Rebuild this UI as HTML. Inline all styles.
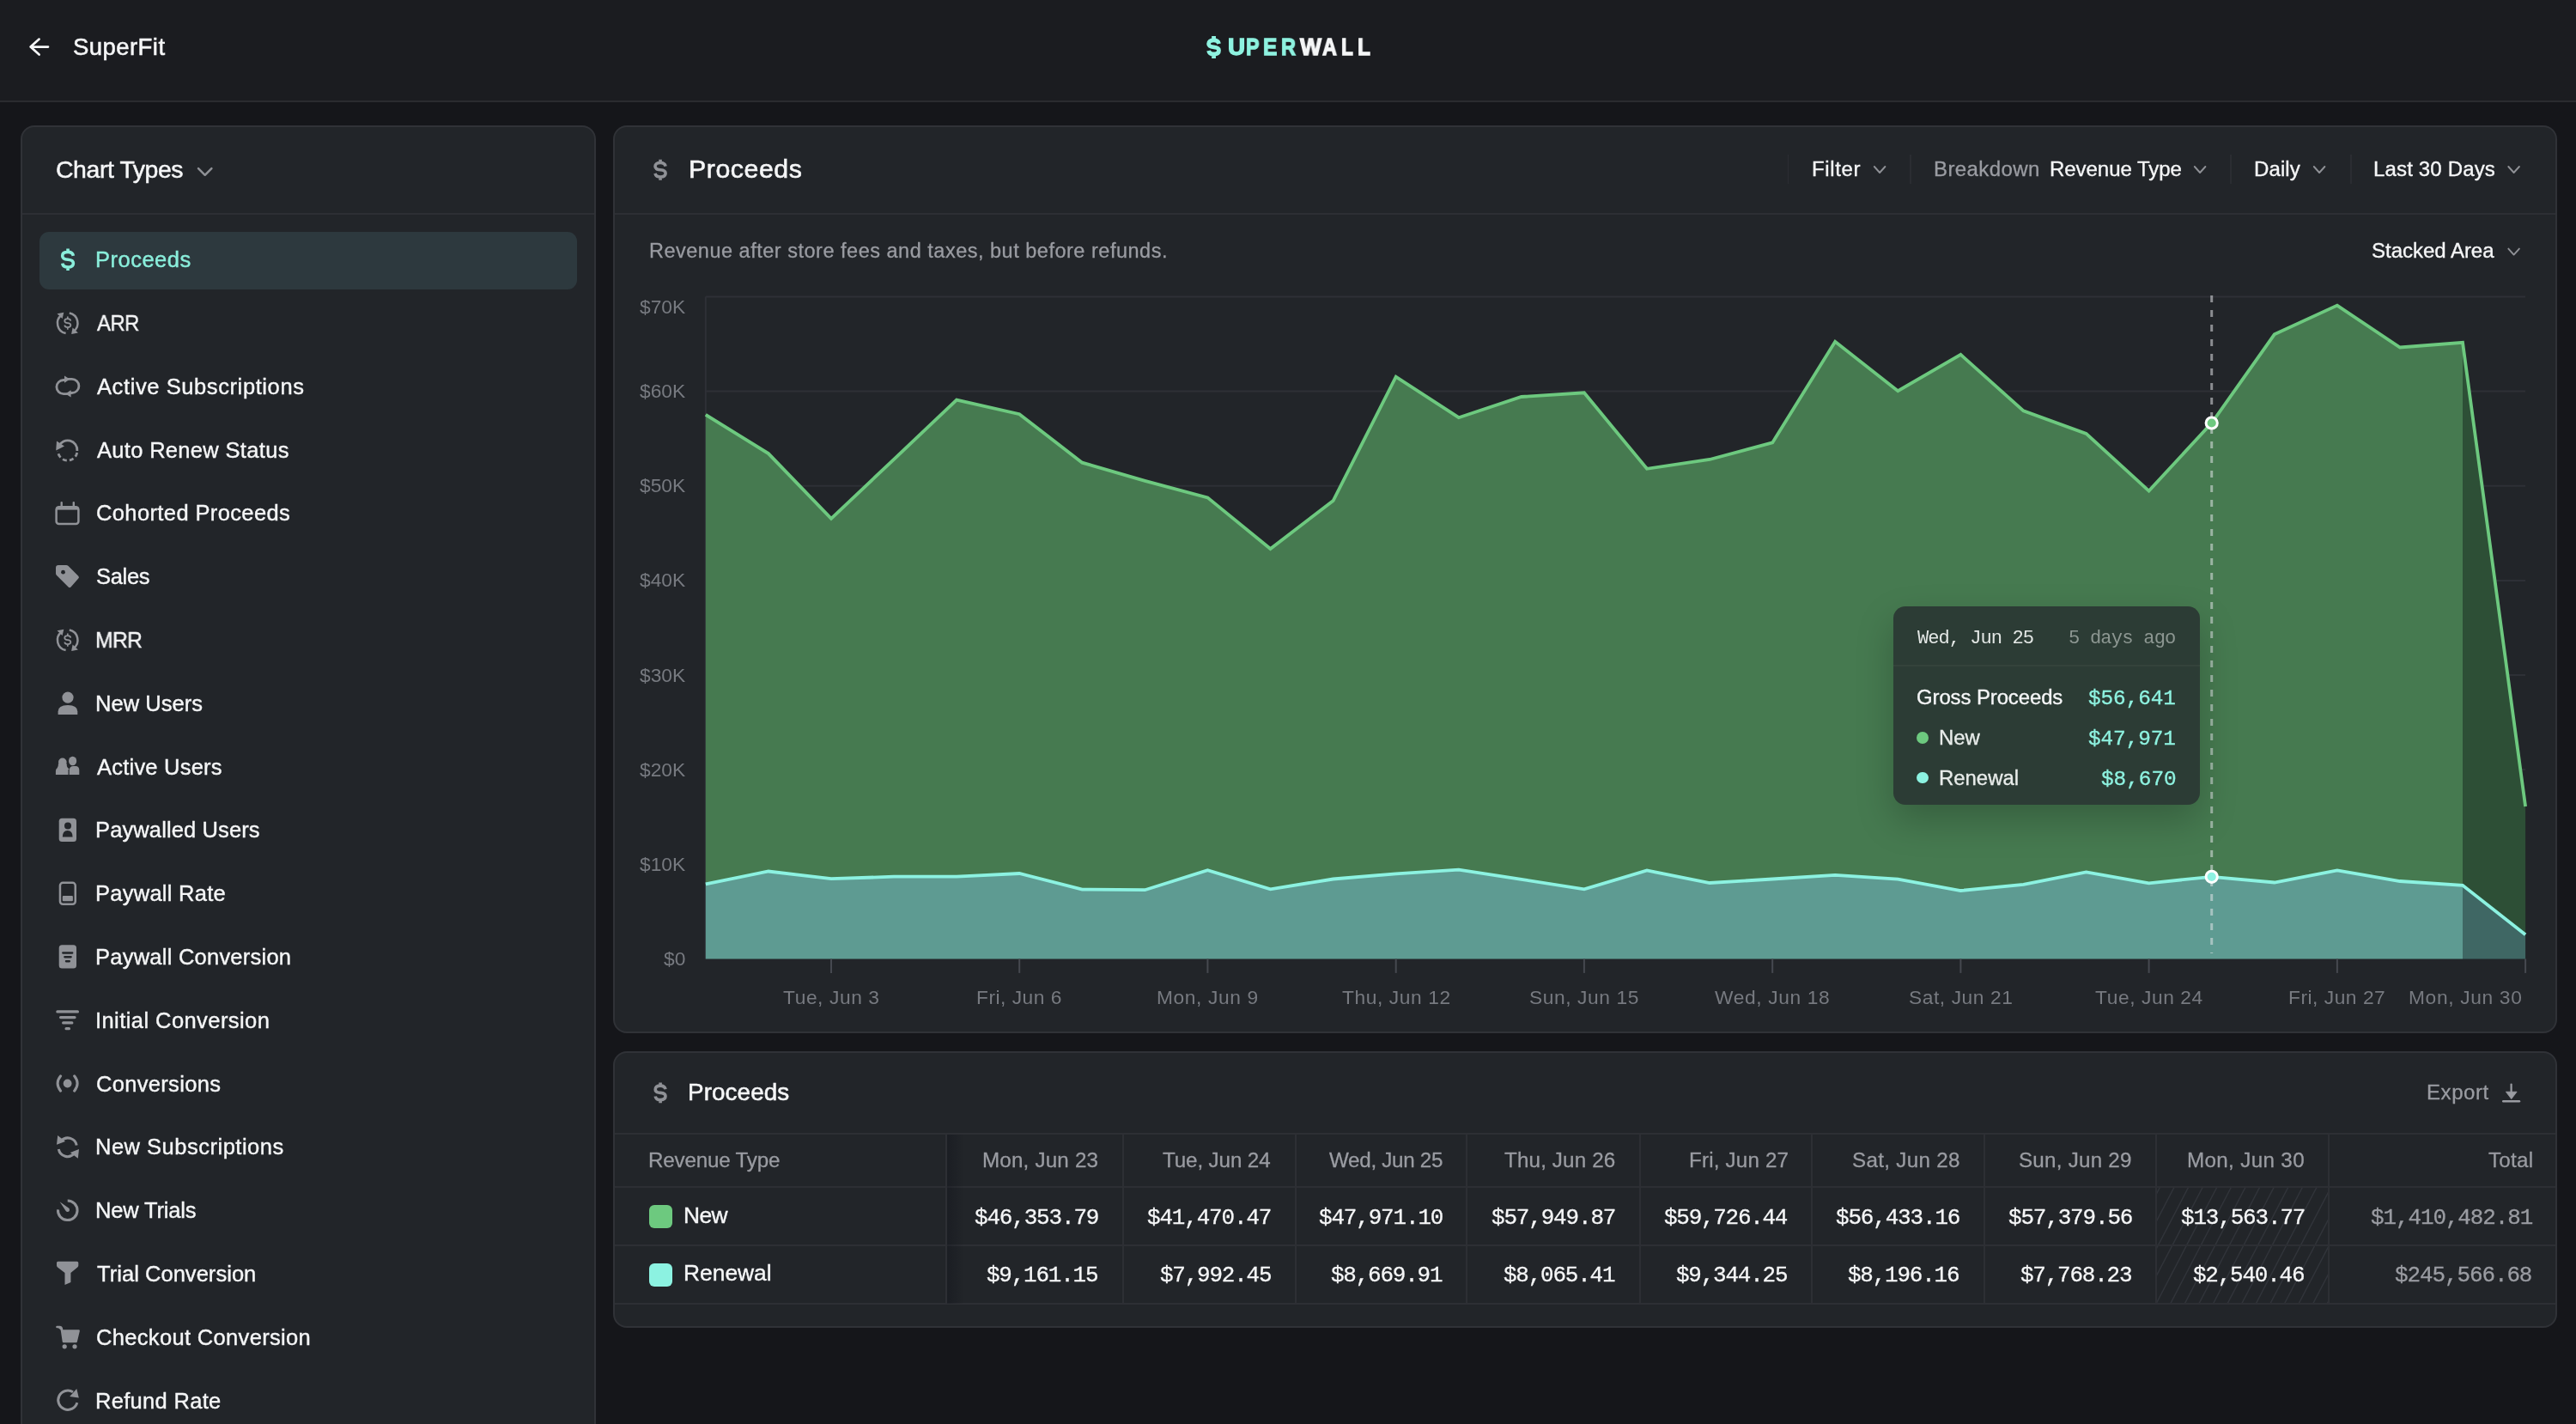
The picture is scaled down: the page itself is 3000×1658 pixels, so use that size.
<!DOCTYPE html>
<html><head><meta charset="utf-8"><title>SuperFit - Proceeds</title>
<style>
html,body{margin:0;padding:0;width:3000px;height:1658px;overflow:hidden;background:#15161a;}
body{position:relative;font-family:"Liberation Sans",sans-serif;}
.b{position:absolute;box-sizing:content-box;}
svg.b{overflow:visible;}
.t{position:absolute;white-space:pre;will-change:transform;}
</style></head><body>
<div class="b" style="left:0;top:0;width:3000px;height:117px;background:#1b1c20"></div>
<div class="b" style="left:0;top:117px;width:3000px;height:2px;background:#2a2b2f"></div>
<svg class="b" style="left:0;top:0" width="100" height="100" viewBox="0 0 100 100"><path d="M56 54.6 H36.2 M45.6 45.6 L35.6 54.6 L45.6 63.6" fill="none" stroke="#f5f6f7" stroke-width="2.7" stroke-linecap="round" stroke-linejoin="round"/></svg>
<svg class="b" style="left:0;top:0" width="1600" height="100" viewBox="0 0 1600 100"><g transform="translate(1407.60 46.90) scale(11.900 16.100)"><path d="M1 0.25 Q0.93 0 0.5 0 Q0 0 0 0.26 Q0 0.47 0.5 0.5 Q1 0.53 1 0.74 Q1 1 0.5 1 Q0.06 1 0 0.75 M0.5 -0.311 V0 M0.5 1 V1.311" fill="none" stroke="#8ef2e0" stroke-width="4.8" vector-effect="non-scaling-stroke" stroke-linecap="butt"/></g></svg>
<div class="b" style="left:24px;top:146px;width:666px;height:1600px;background:#222529;border:2px solid #303237;border-radius:16px"></div>
<div class="b" style="left:26px;top:248px;width:666px;height:2px;background:#2d2f34"></div>
<svg class="b" style="left:0;top:0" width="300" height="300" viewBox="0 0 300 300"><path d="M231 196.2 L238.7 203.8 L246.4 196.2" fill="none" stroke="#8f9196" stroke-width="2.5" stroke-linecap="round" stroke-linejoin="round"/></svg>
<div class="b" style="left:46px;top:270px;width:626px;height:66.5px;background:#2d393e;border-radius:11px"></div>
<svg class="b" style="left:0;top:0" width="300" height="400" viewBox="0 0 300 400"><g transform="translate(72.70 293.36) scale(12.700 17.688)"><path d="M1 0.25 Q0.93 0 0.5 0 Q0 0 0 0.26 Q0 0.47 0.5 0.5 Q1 0.53 1 0.74 Q1 1 0.5 1 Q0.06 1 0 0.75 M0.5 -0.224 V0 M0.5 1 V1.224" fill="none" stroke="#8aeedb" stroke-width="3.6" vector-effect="non-scaling-stroke" stroke-linecap="butt"/></g></svg>
<svg class="b" style="left:0;top:0" width="700" height="1658" viewBox="0 0 700 1658"><g transform="translate(0 73.80)"><path d="M71.8 292.9 A12 12 0 0 0 76.6 314.3" fill="none" stroke="#909297" stroke-width="2.5"/><path d="M80.8 290.7 A12 12 0 0 1 85.6 312.1" fill="none" stroke="#909297" stroke-width="2.5"/><path d="M66.5 291.5 L74.3 289.9 L72.6 297.3 Z" fill="#909297"/><path d="M90.9 313.7 L83.1 315.1 L84.6 307.7 Z" fill="#909297"/><g transform="translate(75.25 297.25) scale(7.100 10.096)"><path d="M1 0.25 Q0.93 0 0.5 0 Q0 0 0 0.26 Q0 0.47 0.5 0.5 Q1 0.53 1 0.74 Q1 1 0.5 1 Q0.06 1 0 0.75 M0.5 -0.253 V0 M0.5 1 V1.253" fill="none" stroke="#909297" stroke-width="1.7" vector-effect="non-scaling-stroke" stroke-linecap="butt"/></g></g><g transform="translate(0 442.80)"><path d="M71.8 292.9 A12 12 0 0 0 76.6 314.3" fill="none" stroke="#909297" stroke-width="2.5"/><path d="M80.8 290.7 A12 12 0 0 1 85.6 312.1" fill="none" stroke="#909297" stroke-width="2.5"/><path d="M66.5 291.5 L74.3 289.9 L72.6 297.3 Z" fill="#909297"/><path d="M90.9 313.7 L83.1 315.1 L84.6 307.7 Z" fill="#909297"/><g transform="translate(75.25 297.25) scale(7.100 10.096)"><path d="M1 0.25 Q0.93 0 0.5 0 Q0 0 0 0.26 Q0 0.47 0.5 0.5 Q1 0.53 1 0.74 Q1 1 0.5 1 Q0.06 1 0 0.75 M0.5 -0.253 V0 M0.5 1 V1.253" fill="none" stroke="#909297" stroke-width="1.7" vector-effect="non-scaling-stroke" stroke-linecap="butt"/></g></g><g transform="translate(0 147.60)"><path d="M77 293.70000000000005 H83.8 A8.1 8.1 0 0 1 83.8 309.9 H82" fill="none" stroke="#909297" stroke-width="2.8"/><path d="M80.5 311.1 H74 A8.1 8.1 0 0 1 74 294.9 H75" fill="none" stroke="#909297" stroke-width="2.8"/><path d="M75 289.79999999999995 L81.4 294.0 L75 298.20000000000005 Z" fill="#909297"/><path d="M82.6 306.6 L76.2 310.79999999999995 L82.6 315.0 Z" fill="#909297"/></g><g transform="translate(0 221.40)"><path d="M68.5 298.1 A11.2 11.2 0 0 1 89.9 303.6" fill="none" stroke="#909297" stroke-width="2.8"/><path d="M89.9 303.6 A11.2 11.2 0 0 1 67.5 303.6" fill="none" stroke="#909297" stroke-width="2.8" stroke-dasharray="5 3.2" stroke-dashoffset="-2"/><path d="M65.2 303.1 L66 292.1 L75 298.1 Z" fill="#909297"/></g><g transform="translate(0 295.20)"><rect x="65.6" y="295.00000000000006" width="25.8" height="19.9" rx="3" fill="none" stroke="#909297" stroke-width="2.5"/><rect x="65.6" y="295.00000000000006" width="25.8" height="3.4" fill="#909297"/><rect x="70.5" y="288.7" width="2.4" height="6" rx="1.2" fill="#909297"/><rect x="84.6" y="288.7" width="2.4" height="6" rx="1.2" fill="#909297"/></g><g transform="translate(0 369.00)"><path d="M65 292 Q65 289 68 289 H77 Q78.5 289 79.6 290.1 L91.3 301.79999999999995 Q92.7 303.20000000000005 91.3 304.6 L82.5 314.6 Q81 316 79.6 314.6 L66.1 301.1 Q65 300 65 298.5 Z" fill="#909297"/><circle cx="73.5" cy="297.20000000000005" r="2.4" fill="#222529"/></g><g transform="translate(0 516.60)"><circle cx="79" cy="295.5" r="6.6" fill="#909297"/><path d="M67.6 315.4 V311.9 Q67.6 304.4 79 304.4 Q90.3 304.4 90.3 311.9 V315.4 Z" fill="#909297"/></g><g transform="translate(0 590.40)"><circle cx="72.8" cy="296.9" r="4.8" fill="#909297"/><path d="M68 298.6 Q68 302.6 66.5 304.1 H79 Q77.6 302.6 77.6 298.6 Z" fill="#909297"/><path d="M64.9 311.6 V307.6 Q64.9 303.1 69.5 303.1 H76.5 Q81 303.1 81 307.6 V311.6 Z" fill="#909297"/><ellipse cx="84.6" cy="295.6" rx="4.6" ry="5.2" fill="#909297"/><path d="M80.8 311.6 V306.6 Q80.8 301.6 85.5 301.6 H88 Q92.3 301.6 92.3 306.6 V311.6 Z" fill="#909297"/><path d="M80.1 311.6 V305.6" stroke="#222529" stroke-width="1.2"/></g><g transform="translate(0 664.20)"><rect x="68.7" y="288.5" width="20.3" height="27.3" rx="3.5" fill="#909297"/><circle cx="79" cy="297.4" r="4" fill="#222529"/><path d="M72.8 310.4 Q72.8 302.79999999999995 78.7 302.79999999999995 Q84.6 302.79999999999995 84.6 310.4 Z" fill="#222529"/></g><g transform="translate(0 738.00)"><rect x="69.95" y="289.8499999999999" width="17.8" height="24.9" rx="3.2" fill="none" stroke="#909297" stroke-width="2.5"/><rect x="72.8" y="305" width="12.1" height="6.2" rx="1" fill="#909297"/></g><g transform="translate(0 811.80)"><rect x="68.7" y="288.5" width="20.3" height="27.2" rx="3.5" fill="#909297"/><rect x="72.1" y="296.5" width="13.3" height="2.4" rx="1.1" fill="#222529"/><rect x="74.2" y="301.20000000000005" width="9.6" height="2.4" rx="1.1" fill="#222529"/><rect x="75.8" y="306.20000000000005" width="6.2" height="2.4" rx="1.1" fill="#222529"/></g><g transform="translate(0 885.60)"><path d="M66.9 292.30000000000007 H90.4 M70.6 298.9999999999999 H87 M73.7 305.30000000000007 H83.8 M77.1 312.1 H80.4" stroke="#909297" stroke-width="3.3" stroke-linecap="round"/></g><g transform="translate(0 959.40)"><circle cx="78.6" cy="302.1" r="4.9" fill="#909297"/><path d="M70.6 293.40000000000003 Q63.6 302.1 70.6 310.8" fill="none" stroke="#909297" stroke-width="3" stroke-linecap="round"/><path d="M86.6 293.40000000000003 Q93.6 302.1 86.6 310.8" fill="none" stroke="#909297" stroke-width="3" stroke-linecap="round"/></g><g transform="translate(0 1033.20)"><path d="M71.5 294.79999999999995 A10.5 10.5 0 0 1 89.2 300.29999999999995" fill="none" stroke="#909297" stroke-width="3"/><path d="M86.5 309.79999999999995 A10.5 10.5 0 0 1 68.3 304.79999999999995" fill="none" stroke="#909297" stroke-width="3"/><path d="M66 299.49999999999994 L67.2 288.79999999999995 L76 295.79999999999995 Z" fill="#909297"/><path d="M92 304.79999999999995 L90.8 315.59999999999997 L81.8 308.79999999999995 Z" fill="#909297"/></g><g transform="translate(0 1107.00)"><path d="M78.7 290.99999999999994 A11.3 11.3 0 1 1 67.5 301.29999999999995" fill="none" stroke="#909297" stroke-width="3"/><path d="M69.6 292.29999999999995 L80.6 300.09999999999997 Q82 303.9 78.4 304.09999999999997 Q76.8 303.79999999999995 76.2 302.29999999999995 Z" fill="#909297"/></g><g transform="translate(0 1180.80)"><path d="M66 289.5 Q66 287.9000000000001 67.6 287.9000000000001 H89.7 Q91.3 287.9000000000001 91.3 289.5 V292.79999999999995 Q91.3 294.0 90.3 294.79999999999995 L82.4 301.20000000000005 V312.20000000000005 L75.5 315.20000000000005 V301.20000000000005 L67 294.79999999999995 Q66 294.0 66 292.79999999999995 Z" fill="#909297"/></g><g transform="translate(0 1254.60)"><path d="M66.5 290.4000000000001 H70 Q71.4 290.4000000000001 71.7 291.9000000000001 L74 307.4000000000001 H88.6 L91.6 294.9000000000001 H72" fill="#909297" stroke="#909297" stroke-width="2.6" stroke-linejoin="round" stroke-linecap="round"/><circle cx="75.2" cy="313.20000000000005" r="2.6" fill="#909297"/><circle cx="87" cy="313.20000000000005" r="2.6" fill="#909297"/></g><g transform="translate(0 1328.40)"><path d="M85 292.3999999999998 A11.2 11.2 0 1 0 89.8 304.6999999999998" fill="none" stroke="#909297" stroke-width="3"/><path d="M81.2 297.49999999999983 L89.3 288.49999999999983 L91.8 299.1999999999998 Z" fill="#909297"/></g></svg>
<div class="b" style="left:714.2px;top:146px;width:2259.8px;height:1053.4px;background:#222529;border:2px solid #303237;border-radius:16px"></div>
<div class="b" style="left:716.2px;top:248px;width:2259.8px;height:2px;background:#2d2f34"></div>
<svg class="b" style="left:0;top:0" width="1000" height="400" viewBox="0 0 1000 400"><g transform="translate(763.00 189.53) scale(12.100 16.447)"><path d="M1 0.25 Q0.93 0 0.5 0 Q0 0 0 0.26 Q0 0.47 0.5 0.5 Q1 0.53 1 0.74 Q1 1 0.5 1 Q0.06 1 0 0.75 M0.5 -0.227 V0 M0.5 1 V1.227" fill="none" stroke="#8f9196" stroke-width="3.6" vector-effect="non-scaling-stroke" stroke-linecap="butt"/></g></svg>
<div class="b" style="left:2081.7px;top:180px;width:1.8px;height:34px;background:#2b2d32"></div>
<div class="b" style="left:2224.0px;top:180px;width:1.8px;height:34px;background:#2b2d32"></div>
<div class="b" style="left:2597.1px;top:180px;width:1.8px;height:34px;background:#2b2d32"></div>
<div class="b" style="left:2736.9px;top:180px;width:1.8px;height:34px;background:#2b2d32"></div>
<svg class="b" style="left:0;top:0" width="3000" height="1658" viewBox="0 0 3000 1658"><line x1="821.8" y1="1006.3" x2="2941.1" y2="1006.3" stroke="#2e3036" stroke-width="2"/><line x1="821.8" y1="896.1" x2="2941.1" y2="896.1" stroke="#2e3036" stroke-width="2"/><line x1="821.8" y1="786.0" x2="2941.1" y2="786.0" stroke="#2e3036" stroke-width="2"/><line x1="821.8" y1="675.9" x2="2941.1" y2="675.9" stroke="#2e3036" stroke-width="2"/><line x1="821.8" y1="565.8" x2="2941.1" y2="565.8" stroke="#2e3036" stroke-width="2"/><line x1="821.8" y1="455.6" x2="2941.1" y2="455.6" stroke="#2e3036" stroke-width="2"/><line x1="821.8" y1="345.5" x2="2941.1" y2="345.5" stroke="#2e3036" stroke-width="2"/><line x1="821.8" y1="345.5" x2="821.8" y2="1116.4" stroke="#2e3036" stroke-width="2"/><polygon points="821.8,482.8 894.9,528.1 968.0,603.9 1041.0,534.8 1114.1,465.7 1187.2,482.2 1260.3,538.7 1333.4,559.8 1406.4,579.4 1479.5,639.0 1552.6,583.1 1625.7,438.7 1698.8,486.2 1771.8,462.0 1844.9,457.3 1918.0,545.8 1991.1,535.0 2064.2,515.4 2137.2,397.7 2210.3,455.2 2283.4,412.9 2356.5,478.4 2429.6,504.9 2502.6,571.6 2575.7,492.5 2648.8,389.3 2721.9,355.6 2795.0,404.5 2868.0,398.8 2868.0,1030.8 2795.0,1026.0 2721.9,1013.4 2648.8,1027.5 2575.7,1020.8 2502.6,1028.3 2429.6,1015.4 2356.5,1029.9 2283.4,1037.0 2210.3,1023.7 2137.2,1018.8 2064.2,1023.5 1991.1,1028.0 1918.0,1013.5 1844.9,1035.3 1771.8,1023.9 1698.8,1012.6 1625.7,1017.3 1552.6,1023.5 1479.5,1035.3 1406.4,1013.2 1333.4,1036.2 1260.3,1035.6 1187.2,1017.0 1114.1,1020.7 1041.0,1020.7 968.0,1023.2 894.9,1014.5 821.8,1029.4" fill="#467a50"/><polygon points="821.8,1029.4 894.9,1014.5 968.0,1023.2 1041.0,1020.7 1114.1,1020.7 1187.2,1017.0 1260.3,1035.6 1333.4,1036.2 1406.4,1013.2 1479.5,1035.3 1552.6,1023.5 1625.7,1017.3 1698.8,1012.6 1771.8,1023.9 1844.9,1035.3 1918.0,1013.5 1991.1,1028.0 2064.2,1023.5 2137.2,1018.8 2210.3,1023.7 2283.4,1037.0 2356.5,1029.9 2429.6,1015.4 2502.6,1028.3 2575.7,1020.8 2648.8,1027.5 2721.9,1013.4 2795.0,1026.0 2868.0,1030.8 2868.0,1116.4 821.8,1116.4" fill="#5e9b92"/><polygon points="2868.0,398.8 2941.1,938.9 2941.1,1088.3 2868.0,1030.8" fill="#2d4f36"/><polygon points="2868.0,1030.8 2941.1,1088.3 2941.1,1116.4 2868.0,1116.4" fill="#3f6764"/><polyline points="821.8,482.8 894.9,528.1 968.0,603.9 1041.0,534.8 1114.1,465.7 1187.2,482.2 1260.3,538.7 1333.4,559.8 1406.4,579.4 1479.5,639.0 1552.6,583.1 1625.7,438.7 1698.8,486.2 1771.8,462.0 1844.9,457.3 1918.0,545.8 1991.1,535.0 2064.2,515.4 2137.2,397.7 2210.3,455.2 2283.4,412.9 2356.5,478.4 2429.6,504.9 2502.6,571.6 2575.7,492.5 2648.8,389.3 2721.9,355.6 2795.0,404.5 2868.0,398.8 2941.1,938.9" fill="none" stroke="#6dc97f" stroke-width="3.8" stroke-linejoin="miter"/><polyline points="821.8,1029.4 894.9,1014.5 968.0,1023.2 1041.0,1020.7 1114.1,1020.7 1187.2,1017.0 1260.3,1035.6 1333.4,1036.2 1406.4,1013.2 1479.5,1035.3 1552.6,1023.5 1625.7,1017.3 1698.8,1012.6 1771.8,1023.9 1844.9,1035.3 1918.0,1013.5 1991.1,1028.0 2064.2,1023.5 2137.2,1018.8 2210.3,1023.7 2283.4,1037.0 2356.5,1029.9 2429.6,1015.4 2502.6,1028.3 2575.7,1020.8 2648.8,1027.5 2721.9,1013.4 2795.0,1026.0 2868.0,1030.8 2941.1,1088.3" fill="none" stroke="#8cf2e1" stroke-width="3.8" stroke-linejoin="miter"/><line x1="968.0" y1="1116.4" x2="968.0" y2="1132.9" stroke="#464950" stroke-width="2"/><line x1="1187.2" y1="1116.4" x2="1187.2" y2="1132.9" stroke="#464950" stroke-width="2"/><line x1="1406.4" y1="1116.4" x2="1406.4" y2="1132.9" stroke="#464950" stroke-width="2"/><line x1="1625.7" y1="1116.4" x2="1625.7" y2="1132.9" stroke="#464950" stroke-width="2"/><line x1="1844.9" y1="1116.4" x2="1844.9" y2="1132.9" stroke="#464950" stroke-width="2"/><line x1="2064.2" y1="1116.4" x2="2064.2" y2="1132.9" stroke="#464950" stroke-width="2"/><line x1="2283.4" y1="1116.4" x2="2283.4" y2="1132.9" stroke="#464950" stroke-width="2"/><line x1="2502.6" y1="1116.4" x2="2502.6" y2="1132.9" stroke="#464950" stroke-width="2"/><line x1="2721.9" y1="1116.4" x2="2721.9" y2="1132.9" stroke="#464950" stroke-width="2"/><line x1="2941.1" y1="1116.4" x2="2941.1" y2="1132.9" stroke="#464950" stroke-width="2"/><line x1="2575.7" y1="344" x2="2575.7" y2="1110" stroke="rgba(225,228,232,0.55)" stroke-width="3" stroke-dasharray="8 9"/><circle cx="2575.7" cy="492.5" r="6.6" fill="#6dc97f" stroke="#fff" stroke-width="3"/><circle cx="2575.7" cy="1020.8" r="6.6" fill="#8cf2e1" stroke="#fff" stroke-width="3"/><path d="M2182.8 194.0 L2189.1 201.0 L2195.3999999999996 194.0" fill="none" stroke="#8f9196" stroke-width="1.9" stroke-linecap="round" stroke-linejoin="round"/><path d="M2555.8 194.0 L2562.1 201.0 L2568.3999999999996 194.0" fill="none" stroke="#8f9196" stroke-width="1.9" stroke-linecap="round" stroke-linejoin="round"/><path d="M2694.8 194.0 L2701.1 201.0 L2707.3999999999996 194.0" fill="none" stroke="#8f9196" stroke-width="1.9" stroke-linecap="round" stroke-linejoin="round"/><path d="M2921.3 194.0 L2927.6 201.0 L2933.8999999999996 194.0" fill="none" stroke="#8f9196" stroke-width="1.9" stroke-linecap="round" stroke-linejoin="round"/><path d="M2921.3 289.6 L2927.6 296.59999999999997 L2933.8999999999996 289.6" fill="none" stroke="#8f9196" stroke-width="1.9" stroke-linecap="round" stroke-linejoin="round"/></svg>
<div class="b" style="left:2204.7px;top:706.4px;width:357.0px;height:231.0px;background:#2c3c35;border-radius:14px;box-shadow:0 18px 44px rgba(0,0,0,0.22)"></div>
<div class="b" style="left:2204.7px;top:774px;width:357.0px;height:2px;background:#34433b"></div>
<div class="b" style="left:2232.2px;top:852.2px;width:13.6px;height:13.6px;border-radius:7px;background:#6dc97f"></div>
<div class="b" style="left:2232.2px;top:898.7px;width:13.6px;height:13.6px;border-radius:7px;background:#8cf2e1"></div>
<div class="b" style="left:714.2px;top:1223.6px;width:2259.8px;height:318.4px;background:#222529;border:2px solid #303237;border-radius:16px"></div>
<svg class="b" style="left:0;top:0" width="1000" height="1400" viewBox="0 0 1000 1400"><g transform="translate(763.20 1264.13) scale(11.800 16.447)"><path d="M1 0.25 Q0.93 0 0.5 0 Q0 0 0 0.26 Q0 0.47 0.5 0.5 Q1 0.53 1 0.74 Q1 1 0.5 1 Q0.06 1 0 0.75 M0.5 -0.227 V0 M0.5 1 V1.227" fill="none" stroke="#8f9196" stroke-width="3.6" vector-effect="non-scaling-stroke" stroke-linecap="butt"/></g></svg>
<svg class="b" style="left:2900px;top:1250px" width="50" height="40" viewBox="2900 1250 50 40"><path d="M2924.6 1262.6 V1273" fill="none" stroke="#9a9ca2" stroke-width="2.2" stroke-linecap="round"/><path d="M2918.4 1271.2 L2931.1 1271.2 L2924.75 1279.6 Z" fill="#9a9ca2" stroke="#9a9ca2" stroke-width="0.8" stroke-linejoin="round"/><path d="M2915.2 1282.3 H2934" stroke="#9a9ca2" stroke-width="2.4" stroke-linecap="round"/></svg>
<svg class="b" style="left:2511.4px;top:1382.2px;overflow:hidden" width="201" height="136" viewBox="2511.4 0 201 136"><line x1="2312.2000000000003" y1="136" x2="2383.2000000000003" y2="0" stroke="#31343a" stroke-width="1.5"/><line x1="2328.8" y1="136" x2="2399.8" y2="0" stroke="#31343a" stroke-width="1.5"/><line x1="2345.4" y1="136" x2="2416.4" y2="0" stroke="#31343a" stroke-width="1.5"/><line x1="2362.0" y1="136" x2="2433.0" y2="0" stroke="#31343a" stroke-width="1.5"/><line x1="2378.6" y1="136" x2="2449.6" y2="0" stroke="#31343a" stroke-width="1.5"/><line x1="2395.2000000000003" y1="136" x2="2466.2000000000003" y2="0" stroke="#31343a" stroke-width="1.5"/><line x1="2411.8" y1="136" x2="2482.8" y2="0" stroke="#31343a" stroke-width="1.5"/><line x1="2428.4" y1="136" x2="2499.4" y2="0" stroke="#31343a" stroke-width="1.5"/><line x1="2445.0" y1="136" x2="2516.0" y2="0" stroke="#31343a" stroke-width="1.5"/><line x1="2461.6" y1="136" x2="2532.6" y2="0" stroke="#31343a" stroke-width="1.5"/><line x1="2478.2000000000003" y1="136" x2="2549.2000000000003" y2="0" stroke="#31343a" stroke-width="1.5"/><line x1="2494.8" y1="136" x2="2565.8" y2="0" stroke="#31343a" stroke-width="1.5"/><line x1="2511.4" y1="136" x2="2582.4" y2="0" stroke="#31343a" stroke-width="1.5"/><line x1="2528.0" y1="136" x2="2599.0" y2="0" stroke="#31343a" stroke-width="1.5"/><line x1="2544.6" y1="136" x2="2615.6" y2="0" stroke="#31343a" stroke-width="1.5"/><line x1="2561.2000000000003" y1="136" x2="2632.2000000000003" y2="0" stroke="#31343a" stroke-width="1.5"/><line x1="2577.8" y1="136" x2="2648.8" y2="0" stroke="#31343a" stroke-width="1.5"/><line x1="2594.4" y1="136" x2="2665.4" y2="0" stroke="#31343a" stroke-width="1.5"/><line x1="2611.0" y1="136" x2="2682.0" y2="0" stroke="#31343a" stroke-width="1.5"/><line x1="2627.6" y1="136" x2="2698.6" y2="0" stroke="#31343a" stroke-width="1.5"/><line x1="2644.2000000000003" y1="136" x2="2715.2000000000003" y2="0" stroke="#31343a" stroke-width="1.5"/><line x1="2660.8" y1="136" x2="2731.8" y2="0" stroke="#31343a" stroke-width="1.5"/><line x1="2677.4" y1="136" x2="2748.4" y2="0" stroke="#31343a" stroke-width="1.5"/><line x1="2694.0" y1="136" x2="2765.0" y2="0" stroke="#31343a" stroke-width="1.5"/><line x1="2710.6" y1="136" x2="2781.6" y2="0" stroke="#31343a" stroke-width="1.5"/><line x1="2727.2000000000003" y1="136" x2="2798.2000000000003" y2="0" stroke="#31343a" stroke-width="1.5"/><line x1="2743.8" y1="136" x2="2814.8" y2="0" stroke="#31343a" stroke-width="1.5"/><line x1="2760.4" y1="136" x2="2831.4" y2="0" stroke="#31343a" stroke-width="1.5"/></svg>
<div class="b" style="left:716.2px;top:1319.4px;width:2259.8px;height:2px;background:#2d2f34"></div>
<div class="b" style="left:716.2px;top:1381.2px;width:2259.8px;height:2px;background:#2d2f34"></div>
<div class="b" style="left:716.2px;top:1448.6px;width:2259.8px;height:2px;background:#2d2f34"></div>
<div class="b" style="left:716.2px;top:1516.7px;width:2259.8px;height:2px;background:#2d2f34"></div>
<div class="b" style="left:1103.2px;top:1321.4px;width:20px;height:196.3px;background:linear-gradient(to right, rgba(8,10,20,0.28), rgba(8,10,20,0))"></div>
<div class="b" style="left:1101.2px;top:1320.4px;width:2px;height:197.3px;background:#2d2f34"></div>
<div class="b" style="left:1306.8px;top:1320.4px;width:2px;height:197.3px;background:#2d2f34"></div>
<div class="b" style="left:1507.9px;top:1320.4px;width:2px;height:197.3px;background:#2d2f34"></div>
<div class="b" style="left:1707.3px;top:1320.4px;width:2px;height:197.3px;background:#2d2f34"></div>
<div class="b" style="left:1908.5px;top:1320.4px;width:2px;height:197.3px;background:#2d2f34"></div>
<div class="b" style="left:2109.4px;top:1320.4px;width:2px;height:197.3px;background:#2d2f34"></div>
<div class="b" style="left:2309.6px;top:1320.4px;width:2px;height:197.3px;background:#2d2f34"></div>
<div class="b" style="left:2510.4px;top:1320.4px;width:2px;height:197.3px;background:#2d2f34"></div>
<div class="b" style="left:2711.3px;top:1320.4px;width:2px;height:197.3px;background:#2d2f34"></div>
<div class="b" style="left:756.2px;top:1403px;width:26.6px;height:27px;border-radius:6px;background:#6dc97f"></div>
<div class="b" style="left:756.2px;top:1470.6px;width:26.6px;height:27px;border-radius:6px;background:#8cf2e1"></div>
<div class="t" style="left:85.00px;top:41.29px;font-size:27.54px;line-height:27.54px;font-family:'Liberation Sans';font-weight:400;letter-spacing:0.429px;color:#f5f6f7;-webkit-text-stroke:0.55px #f5f6f7;">SuperFit</div>
<div class="t" style="left:65.20px;top:183.05px;font-size:28.41px;line-height:28.41px;font-family:'Liberation Sans';font-weight:400;letter-spacing:-0.410px;color:#f5f6f7;-webkit-text-stroke:0.5px #f5f6f7;">Chart Types</div>
<div class="t" style="left:111.30px;top:290.11px;font-size:25.51px;line-height:25.51px;font-family:'Liberation Sans';font-weight:400;letter-spacing:0.500px;color:#8aeedb;-webkit-text-stroke:0.4px #8aeedb;">Proceeds</div>
<div class="t" style="left:113.30px;top:363.91px;font-size:25.51px;line-height:25.51px;font-family:'Liberation Sans';font-weight:400;letter-spacing:-0.600px;color:#f5f6f7;-webkit-text-stroke:0.4px #f5f6f7;transform-origin:0 0;transform:scaleX(0.9363);">ARR</div>
<div class="t" style="left:113.30px;top:437.71px;font-size:25.51px;line-height:25.51px;font-family:'Liberation Sans';font-weight:400;letter-spacing:0.595px;color:#f5f6f7;-webkit-text-stroke:0.4px #f5f6f7;">Active Subscriptions</div>
<div class="t" style="left:113.30px;top:511.51px;font-size:25.51px;line-height:25.51px;font-family:'Liberation Sans';font-weight:400;letter-spacing:0.319px;color:#f5f6f7;-webkit-text-stroke:0.4px #f5f6f7;">Auto Renew Status</div>
<div class="t" style="left:112.30px;top:585.31px;font-size:25.51px;line-height:25.51px;font-family:'Liberation Sans';font-weight:400;letter-spacing:0.381px;color:#f5f6f7;-webkit-text-stroke:0.4px #f5f6f7;">Cohorted Proceeds</div>
<div class="t" style="left:112.30px;top:659.11px;font-size:25.51px;line-height:25.51px;font-family:'Liberation Sans';font-weight:400;letter-spacing:-0.300px;color:#f5f6f7;-webkit-text-stroke:0.4px #f5f6f7;">Sales</div>
<div class="t" style="left:111.37px;top:732.91px;font-size:25.51px;line-height:25.51px;font-family:'Liberation Sans';font-weight:400;letter-spacing:-0.600px;color:#f5f6f7;-webkit-text-stroke:0.4px #f5f6f7;transform-origin:0 0;transform:scaleX(0.9647);">MRR</div>
<div class="t" style="left:111.30px;top:806.71px;font-size:25.51px;line-height:25.51px;font-family:'Liberation Sans';font-weight:400;letter-spacing:0.037px;color:#f5f6f7;-webkit-text-stroke:0.4px #f5f6f7;">New Users</div>
<div class="t" style="left:113.30px;top:880.51px;font-size:25.51px;line-height:25.51px;font-family:'Liberation Sans';font-weight:400;letter-spacing:0.218px;color:#f5f6f7;-webkit-text-stroke:0.4px #f5f6f7;">Active Users</div>
<div class="t" style="left:111.30px;top:954.31px;font-size:25.51px;line-height:25.51px;font-family:'Liberation Sans';font-weight:400;letter-spacing:0.121px;color:#f5f6f7;-webkit-text-stroke:0.4px #f5f6f7;">Paywalled Users</div>
<div class="t" style="left:111.30px;top:1028.11px;font-size:25.51px;line-height:25.51px;font-family:'Liberation Sans';font-weight:400;letter-spacing:0.264px;color:#f5f6f7;-webkit-text-stroke:0.4px #f5f6f7;">Paywall Rate</div>
<div class="t" style="left:111.30px;top:1101.91px;font-size:25.51px;line-height:25.51px;font-family:'Liberation Sans';font-weight:400;letter-spacing:0.241px;color:#f5f6f7;-webkit-text-stroke:0.4px #f5f6f7;">Paywall Conversion</div>
<div class="t" style="left:111.30px;top:1175.71px;font-size:25.51px;line-height:25.51px;font-family:'Liberation Sans';font-weight:400;letter-spacing:0.429px;color:#f5f6f7;-webkit-text-stroke:0.4px #f5f6f7;">Initial Conversion</div>
<div class="t" style="left:112.30px;top:1249.51px;font-size:25.51px;line-height:25.51px;font-family:'Liberation Sans';font-weight:400;letter-spacing:0.320px;color:#f5f6f7;-webkit-text-stroke:0.4px #f5f6f7;">Conversions</div>
<div class="t" style="left:111.30px;top:1323.31px;font-size:25.51px;line-height:25.51px;font-family:'Liberation Sans';font-weight:400;letter-spacing:0.500px;color:#f5f6f7;-webkit-text-stroke:0.4px #f5f6f7;">New Subscriptions</div>
<div class="t" style="left:111.30px;top:1397.11px;font-size:25.51px;line-height:25.51px;font-family:'Liberation Sans';font-weight:400;letter-spacing:-0.156px;color:#f5f6f7;-webkit-text-stroke:0.4px #f5f6f7;">New Trials</div>
<div class="t" style="left:113.30px;top:1470.91px;font-size:25.51px;line-height:25.51px;font-family:'Liberation Sans';font-weight:400;letter-spacing:0.040px;color:#f5f6f7;-webkit-text-stroke:0.4px #f5f6f7;">Trial Conversion</div>
<div class="t" style="left:112.30px;top:1544.71px;font-size:25.51px;line-height:25.51px;font-family:'Liberation Sans';font-weight:400;letter-spacing:0.333px;color:#f5f6f7;-webkit-text-stroke:0.4px #f5f6f7;">Checkout Conversion</div>
<div class="t" style="left:111.30px;top:1618.51px;font-size:25.51px;line-height:25.51px;font-family:'Liberation Sans';font-weight:400;letter-spacing:0.310px;color:#f5f6f7;-webkit-text-stroke:0.4px #f5f6f7;">Refund Rate</div>
<div class="t" style="left:801.60px;top:181.96px;font-size:30.29px;line-height:30.29px;font-family:'Liberation Sans';font-weight:400;letter-spacing:0.571px;color:#f5f6f7;-webkit-text-stroke:0.6px #f5f6f7;">Proceeds</div>
<div class="t" style="left:2109.90px;top:184.93px;font-size:24.06px;line-height:24.06px;font-family:'Liberation Sans';font-weight:400;letter-spacing:0.600px;color:#f5f6f7;-webkit-text-stroke:0.35px #f5f6f7;">Filter</div>
<div class="t" style="left:2251.70px;top:184.93px;font-size:24.06px;line-height:24.06px;font-family:'Liberation Sans';font-weight:400;letter-spacing:0.387px;color:#9a9ca2;-webkit-text-stroke:0.3px #9a9ca2;">Breakdown</div>
<div class="t" style="left:2386.60px;top:184.93px;font-size:24.06px;line-height:24.06px;font-family:'Liberation Sans';font-weight:400;letter-spacing:-0.073px;color:#f5f6f7;-webkit-text-stroke:0.35px #f5f6f7;">Revenue Type</div>
<div class="t" style="left:2624.50px;top:184.93px;font-size:24.06px;line-height:24.06px;font-family:'Liberation Sans';font-weight:400;letter-spacing:0.075px;color:#f5f6f7;-webkit-text-stroke:0.35px #f5f6f7;">Daily</div>
<div class="t" style="left:2763.50px;top:184.93px;font-size:24.06px;line-height:24.06px;font-family:'Liberation Sans';font-weight:400;letter-spacing:0.136px;color:#f5f6f7;-webkit-text-stroke:0.35px #f5f6f7;">Last 30 Days</div>
<div class="t" style="left:755.50px;top:280.82px;font-size:23.48px;line-height:23.48px;font-family:'Liberation Sans';font-weight:400;letter-spacing:0.520px;color:#9a9ca2;-webkit-text-stroke:0.3px #9a9ca2;">Revenue after store fees and taxes, but before refunds.</div>
<div class="t" style="left:2761.50px;top:280.33px;font-size:24.06px;line-height:24.06px;font-family:'Liberation Sans';font-weight:400;letter-spacing:-0.045px;color:#f5f6f7;-webkit-text-stroke:0.35px #f5f6f7;">Stacked Area</div>
<div class="t" style="left:772.60px;top:1104.99px;font-size:22.75px;line-height:22.75px;font-family:'Liberation Sans';font-weight:400;letter-spacing:0.000px;color:#777a80;">$0</div>
<div class="t" style="left:744.60px;top:994.86px;font-size:22.75px;line-height:22.75px;font-family:'Liberation Sans';font-weight:400;letter-spacing:0.000px;color:#777a80;">$10K</div>
<div class="t" style="left:744.60px;top:884.73px;font-size:22.75px;line-height:22.75px;font-family:'Liberation Sans';font-weight:400;letter-spacing:0.000px;color:#777a80;">$20K</div>
<div class="t" style="left:744.60px;top:774.60px;font-size:22.75px;line-height:22.75px;font-family:'Liberation Sans';font-weight:400;letter-spacing:0.000px;color:#777a80;">$30K</div>
<div class="t" style="left:744.60px;top:664.47px;font-size:22.75px;line-height:22.75px;font-family:'Liberation Sans';font-weight:400;letter-spacing:0.000px;color:#777a80;">$40K</div>
<div class="t" style="left:744.60px;top:554.34px;font-size:22.75px;line-height:22.75px;font-family:'Liberation Sans';font-weight:400;letter-spacing:0.000px;color:#777a80;">$50K</div>
<div class="t" style="left:744.60px;top:444.21px;font-size:22.75px;line-height:22.75px;font-family:'Liberation Sans';font-weight:400;letter-spacing:0.000px;color:#777a80;">$60K</div>
<div class="t" style="left:744.60px;top:346.19px;font-size:22.75px;line-height:22.75px;font-family:'Liberation Sans';font-weight:400;letter-spacing:0.000px;color:#777a80;">$70K</div>
<div class="t" style="left:912.31px;top:1149.74px;font-size:22.75px;line-height:22.75px;font-family:'Liberation Sans';font-weight:400;letter-spacing:0.589px;color:#777a80;">Tue, Jun 3</div>
<div class="t" style="left:1136.90px;top:1149.74px;font-size:22.75px;line-height:22.75px;font-family:'Liberation Sans';font-weight:400;letter-spacing:0.511px;color:#777a80;">Fri, Jun 6</div>
<div class="t" style="left:1346.69px;top:1149.74px;font-size:22.75px;line-height:22.75px;font-family:'Liberation Sans';font-weight:400;letter-spacing:0.611px;color:#777a80;">Mon, Jun 9</div>
<div class="t" style="left:1563.20px;top:1149.74px;font-size:22.75px;line-height:22.75px;font-family:'Liberation Sans';font-weight:400;letter-spacing:0.595px;color:#777a80;">Thu, Jun 12</div>
<div class="t" style="left:1780.92px;top:1149.74px;font-size:22.75px;line-height:22.75px;font-family:'Liberation Sans';font-weight:400;letter-spacing:0.600px;color:#777a80;">Sun, Jun 15</div>
<div class="t" style="left:1997.48px;top:1149.74px;font-size:22.75px;line-height:22.75px;font-family:'Liberation Sans';font-weight:400;letter-spacing:0.635px;color:#777a80;">Wed, Jun 18</div>
<div class="t" style="left:2222.55px;top:1149.74px;font-size:22.75px;line-height:22.75px;font-family:'Liberation Sans';font-weight:400;letter-spacing:0.570px;color:#777a80;">Sat, Jun 21</div>
<div class="t" style="left:2440.16px;top:1149.74px;font-size:22.75px;line-height:22.75px;font-family:'Liberation Sans';font-weight:400;letter-spacing:0.595px;color:#777a80;">Tue, Jun 24</div>
<div class="t" style="left:2664.76px;top:1149.74px;font-size:22.75px;line-height:22.75px;font-family:'Liberation Sans';font-weight:400;letter-spacing:0.525px;color:#777a80;">Fri, Jun 27</div>
<div class="t" style="left:2805.00px;top:1149.74px;font-size:22.75px;line-height:22.75px;font-family:'Liberation Sans';font-weight:400;letter-spacing:0.660px;color:#777a80;">Mon, Jun 30</div>
<div class="t" style="left:2233.00px;top:733.35px;font-size:22.12px;line-height:22.12px;font-family:'Liberation Mono';font-weight:400;letter-spacing:-1.000px;color:#e3e7e5;">Wed, Jun 25</div>
<div class="t" style="left:2408.70px;top:733.35px;font-size:22.12px;line-height:22.12px;font-family:'Liberation Mono';font-weight:400;letter-spacing:-0.811px;color:#8d9792;">5 days ago</div>
<div class="t" style="left:2232.00px;top:800.36px;font-size:23.91px;line-height:23.91px;font-family:'Liberation Sans';font-weight:400;letter-spacing:-0.085px;color:#f5f6f7;-webkit-text-stroke:0.35px #f5f6f7;">Gross Proceeds</div>
<div class="t" style="left:2431.90px;top:802.41px;font-size:24.39px;line-height:24.39px;font-family:'Liberation Mono';font-weight:400;letter-spacing:-0.083px;color:#8ef2e0;-webkit-text-stroke:0.3px #8ef2e0;">$56,641</div>
<div class="t" style="left:2258.30px;top:847.16px;font-size:23.91px;line-height:23.91px;font-family:'Liberation Sans';font-weight:400;letter-spacing:0.000px;color:#e8ecea;-webkit-text-stroke:0.35px #e8ecea;">New</div>
<div class="t" style="left:2431.90px;top:849.21px;font-size:24.39px;line-height:24.39px;font-family:'Liberation Mono';font-weight:400;letter-spacing:-0.083px;color:#8ef2e0;-webkit-text-stroke:0.3px #8ef2e0;">$47,971</div>
<div class="t" style="left:2258.30px;top:893.56px;font-size:23.91px;line-height:23.91px;font-family:'Liberation Sans';font-weight:400;letter-spacing:0.000px;color:#e8ecea;-webkit-text-stroke:0.35px #e8ecea;">Renewal</div>
<div class="t" style="left:2446.50px;top:895.61px;font-size:24.39px;line-height:24.39px;font-family:'Liberation Mono';font-weight:400;letter-spacing:-0.020px;color:#8ef2e0;-webkit-text-stroke:0.3px #8ef2e0;">$8,670</div>
<div class="t" style="left:800.50px;top:1258.14px;font-size:27.83px;line-height:27.83px;font-family:'Liberation Sans';font-weight:400;letter-spacing:0.086px;color:#f5f6f7;-webkit-text-stroke:0.55px #f5f6f7;">Proceeds</div>
<div class="t" style="left:2825.90px;top:1260.23px;font-size:24.06px;line-height:24.06px;font-family:'Liberation Sans';font-weight:400;letter-spacing:0.540px;color:#9a9ca2;-webkit-text-stroke:0.3px #9a9ca2;">Export</div>
<div class="t" style="left:755.10px;top:1338.51px;font-size:24.2px;line-height:24.2px;font-family:'Liberation Sans';font-weight:400;letter-spacing:-0.200px;color:#9a9ca2;-webkit-text-stroke:0.3px #9a9ca2;">Revenue Type</div>
<div class="t" style="left:1144.10px;top:1338.51px;font-size:24.2px;line-height:24.2px;font-family:'Liberation Sans';font-weight:400;letter-spacing:0.190px;color:#9a9ca2;-webkit-text-stroke:0.3px #9a9ca2;">Mon, Jun 23</div>
<div class="t" style="left:1135.10px;top:1405.54px;font-size:25.91px;line-height:25.91px;font-family:'Liberation Mono';font-weight:400;letter-spacing:-1.122px;color:#f5f6f7;-webkit-text-stroke:0.3px #f5f6f7;">$46,353.79</div>
<div class="t" style="left:1149.40px;top:1473.14px;font-size:25.91px;line-height:25.91px;font-family:'Liberation Mono';font-weight:400;letter-spacing:-1.175px;color:#f5f6f7;-webkit-text-stroke:0.3px #f5f6f7;">$9,161.15</div>
<div class="t" style="left:1354.30px;top:1338.51px;font-size:24.2px;line-height:24.2px;font-family:'Liberation Sans';font-weight:400;letter-spacing:-0.120px;color:#9a9ca2;-webkit-text-stroke:0.3px #9a9ca2;">Tue, Jun 24</div>
<div class="t" style="left:1336.20px;top:1405.54px;font-size:25.91px;line-height:25.91px;font-family:'Liberation Mono';font-weight:400;letter-spacing:-1.122px;color:#f5f6f7;-webkit-text-stroke:0.3px #f5f6f7;">$41,470.47</div>
<div class="t" style="left:1350.50px;top:1473.14px;font-size:25.91px;line-height:25.91px;font-family:'Liberation Mono';font-weight:400;letter-spacing:-1.175px;color:#f5f6f7;-webkit-text-stroke:0.3px #f5f6f7;">$7,992.45</div>
<div class="t" style="left:1547.50px;top:1338.51px;font-size:24.2px;line-height:24.2px;font-family:'Liberation Sans';font-weight:400;letter-spacing:-0.300px;color:#9a9ca2;-webkit-text-stroke:0.3px #9a9ca2;">Wed, Jun 25</div>
<div class="t" style="left:1535.60px;top:1405.54px;font-size:25.91px;line-height:25.91px;font-family:'Liberation Mono';font-weight:400;letter-spacing:-1.122px;color:#f5f6f7;-webkit-text-stroke:0.3px #f5f6f7;">$47,971.10</div>
<div class="t" style="left:1549.90px;top:1473.14px;font-size:25.91px;line-height:25.91px;font-family:'Liberation Mono';font-weight:400;letter-spacing:-1.175px;color:#f5f6f7;-webkit-text-stroke:0.3px #f5f6f7;">$8,669.91</div>
<div class="t" style="left:1752.20px;top:1338.51px;font-size:24.2px;line-height:24.2px;font-family:'Liberation Sans';font-weight:400;letter-spacing:0.150px;color:#9a9ca2;-webkit-text-stroke:0.3px #9a9ca2;">Thu, Jun 26</div>
<div class="t" style="left:1736.80px;top:1405.54px;font-size:25.91px;line-height:25.91px;font-family:'Liberation Mono';font-weight:400;letter-spacing:-1.122px;color:#f5f6f7;-webkit-text-stroke:0.3px #f5f6f7;">$57,949.87</div>
<div class="t" style="left:1751.10px;top:1473.14px;font-size:25.91px;line-height:25.91px;font-family:'Liberation Mono';font-weight:400;letter-spacing:-1.175px;color:#f5f6f7;-webkit-text-stroke:0.3px #f5f6f7;">$8,065.41</div>
<div class="t" style="left:1966.80px;top:1338.51px;font-size:24.2px;line-height:24.2px;font-family:'Liberation Sans';font-weight:400;letter-spacing:0.180px;color:#9a9ca2;-webkit-text-stroke:0.3px #9a9ca2;">Fri, Jun 27</div>
<div class="t" style="left:1937.70px;top:1405.54px;font-size:25.91px;line-height:25.91px;font-family:'Liberation Mono';font-weight:400;letter-spacing:-1.233px;color:#f5f6f7;-webkit-text-stroke:0.3px #f5f6f7;">$59,726.44</div>
<div class="t" style="left:1952.00px;top:1473.14px;font-size:25.91px;line-height:25.91px;font-family:'Liberation Mono';font-weight:400;letter-spacing:-1.175px;color:#f5f6f7;-webkit-text-stroke:0.3px #f5f6f7;">$9,344.25</div>
<div class="t" style="left:2156.80px;top:1338.51px;font-size:24.2px;line-height:24.2px;font-family:'Liberation Sans';font-weight:400;letter-spacing:0.300px;color:#9a9ca2;-webkit-text-stroke:0.3px #9a9ca2;">Sat, Jun 28</div>
<div class="t" style="left:2137.90px;top:1405.54px;font-size:25.91px;line-height:25.91px;font-family:'Liberation Mono';font-weight:400;letter-spacing:-1.122px;color:#f5f6f7;-webkit-text-stroke:0.3px #f5f6f7;">$56,433.16</div>
<div class="t" style="left:2152.20px;top:1473.14px;font-size:25.91px;line-height:25.91px;font-family:'Liberation Mono';font-weight:400;letter-spacing:-1.175px;color:#f5f6f7;-webkit-text-stroke:0.3px #f5f6f7;">$8,196.16</div>
<div class="t" style="left:2351.20px;top:1338.51px;font-size:24.2px;line-height:24.2px;font-family:'Liberation Sans';font-weight:400;letter-spacing:0.240px;color:#9a9ca2;-webkit-text-stroke:0.3px #9a9ca2;">Sun, Jun 29</div>
<div class="t" style="left:2338.70px;top:1405.54px;font-size:25.91px;line-height:25.91px;font-family:'Liberation Mono';font-weight:400;letter-spacing:-1.122px;color:#f5f6f7;-webkit-text-stroke:0.3px #f5f6f7;">$57,379.56</div>
<div class="t" style="left:2353.00px;top:1473.14px;font-size:25.91px;line-height:25.91px;font-family:'Liberation Mono';font-weight:400;letter-spacing:-1.175px;color:#f5f6f7;-webkit-text-stroke:0.3px #f5f6f7;">$7,768.23</div>
<div class="t" style="left:2547.00px;top:1338.51px;font-size:24.2px;line-height:24.2px;font-family:'Liberation Sans';font-weight:400;letter-spacing:0.350px;color:#9a9ca2;-webkit-text-stroke:0.3px #9a9ca2;">Mon, Jun 30</div>
<div class="t" style="left:2539.60px;top:1405.54px;font-size:25.91px;line-height:25.91px;font-family:'Liberation Mono';font-weight:400;letter-spacing:-1.122px;color:#f5f6f7;-webkit-text-stroke:0.3px #f5f6f7;">$13,563.77</div>
<div class="t" style="left:2553.90px;top:1473.14px;font-size:25.91px;line-height:25.91px;font-family:'Liberation Mono';font-weight:400;letter-spacing:-1.175px;color:#f5f6f7;-webkit-text-stroke:0.3px #f5f6f7;">$2,540.46</div>
<div class="t" style="left:2897.70px;top:1338.51px;font-size:24.2px;line-height:24.2px;font-family:'Liberation Sans';font-weight:400;letter-spacing:0.250px;color:#9a9ca2;-webkit-text-stroke:0.3px #9a9ca2;">Total</div>
<div class="t" style="left:2760.50px;top:1405.54px;font-size:25.91px;line-height:25.91px;font-family:'Liberation Mono';font-weight:400;letter-spacing:-1.067px;color:#9a9ca2;-webkit-text-stroke:0.3px #9a9ca2;">$1,410,482.81</div>
<div class="t" style="left:2789.30px;top:1473.14px;font-size:25.91px;line-height:25.91px;font-family:'Liberation Mono';font-weight:400;letter-spacing:-1.060px;color:#9a9ca2;-webkit-text-stroke:0.3px #9a9ca2;">$245,566.68</div>
<div class="t" style="left:795.60px;top:1401.67px;font-size:26.38px;line-height:26.38px;font-family:'Liberation Sans';font-weight:400;letter-spacing:-0.550px;color:#f5f6f7;-webkit-text-stroke:0.4px #f5f6f7;">New</div>
<div class="t" style="left:795.60px;top:1469.27px;font-size:26.38px;line-height:26.38px;font-family:'Liberation Sans';font-weight:400;letter-spacing:0.000px;color:#f5f6f7;-webkit-text-stroke:0.4px #f5f6f7;">Renewal</div>
<div class="t" style="left:1429.83px;top:41.06px;font-size:27.14px;line-height:27.14px;font-family:'Liberation Sans';font-weight:700;color:#8ef2e0;transform-origin:0 0;transform:scaleX(1.0254);-webkit-text-stroke:1.3px #8ef2e0;">U</div>
<div class="t" style="left:1451.20px;top:41.06px;font-size:27.14px;line-height:27.14px;font-family:'Liberation Sans';font-weight:700;color:#8ef2e0;transform-origin:0 0;transform:scaleX(0.8575);-webkit-text-stroke:1.3px #8ef2e0;">P</div>
<div class="t" style="left:1471.14px;top:40.99px;font-size:27.54px;line-height:27.54px;font-family:'Liberation Sans';font-weight:700;color:#8ef2e0;transform-origin:0 0;transform:scaleX(0.8856);-webkit-text-stroke:1.3px #8ef2e0;">E</div>
<div class="t" style="left:1491.98px;top:40.99px;font-size:27.54px;line-height:27.54px;font-family:'Liberation Sans';font-weight:700;color:#8ef2e0;transform-origin:0 0;transform:scaleX(0.8568);-webkit-text-stroke:1.3px #8ef2e0;">R</div>
<div class="t" style="left:1513.80px;top:40.99px;font-size:27.54px;line-height:27.54px;font-family:'Liberation Sans';font-weight:700;color:#f5f6f7;transform-origin:0 0;transform:scaleX(0.9620);-webkit-text-stroke:1.3px #f5f6f7;">W</div>
<div class="t" style="left:1540.23px;top:41.33px;font-size:27.14px;line-height:27.14px;font-family:'Liberation Sans';font-weight:700;color:#f5f6f7;transform-origin:0 0;transform:scaleX(0.8615);-webkit-text-stroke:1.3px #f5f6f7;">A</div>
<div class="t" style="left:1562.14px;top:40.99px;font-size:27.54px;line-height:27.54px;font-family:'Liberation Sans';font-weight:700;color:#f5f6f7;transform-origin:0 0;transform:scaleX(0.8241);-webkit-text-stroke:1.3px #f5f6f7;">L</div>
<div class="t" style="left:1580.72px;top:40.99px;font-size:27.54px;line-height:27.54px;font-family:'Liberation Sans';font-weight:700;color:#f5f6f7;transform-origin:0 0;transform:scaleX(0.8939);-webkit-text-stroke:1.3px #f5f6f7;">L</div>
</body></html>
